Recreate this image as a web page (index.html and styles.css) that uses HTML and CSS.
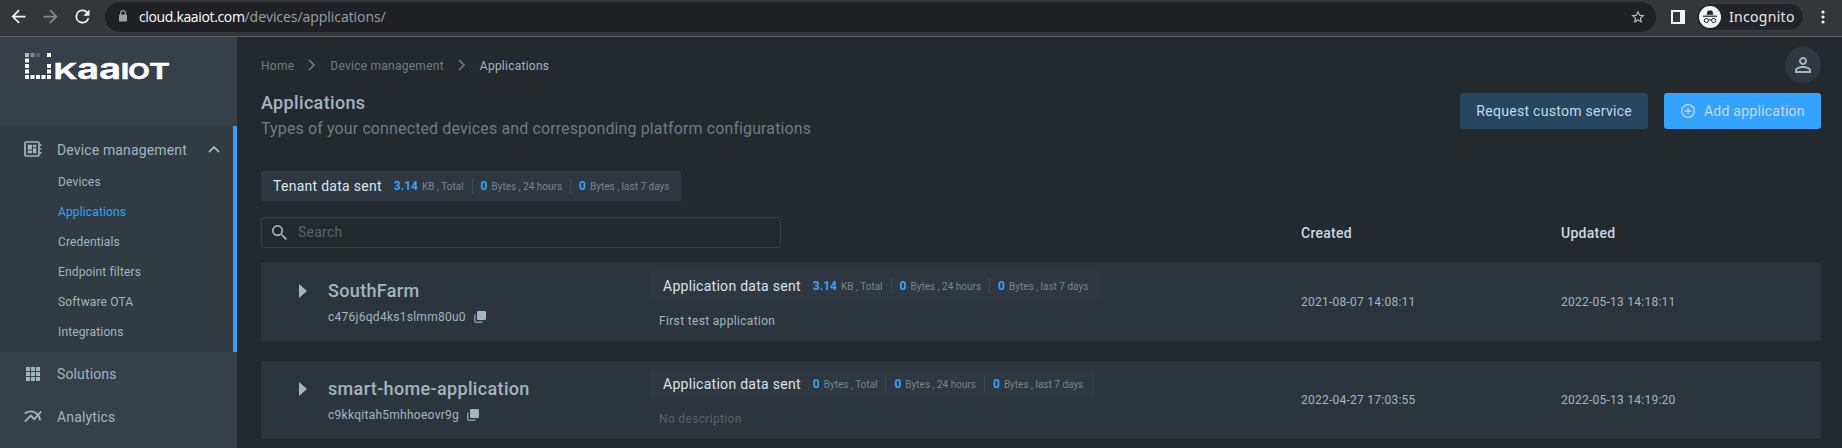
FILE: index.html
```html
<!DOCTYPE html>
<html lang="en">
<head>
<meta charset="utf-8">
<title>Applications</title>
<link rel="stylesheet" href="styles.css">
</head>
<body>
<header class="browser">
  <svg class="nav-icon back" viewBox="0 0 24 24"><path d="M20 11H7.83l5.59-5.59L12 4l-8 8 8 8 1.41-1.41L7.83 13H20v-2z"/></svg>
  <svg class="nav-icon forward" viewBox="0 0 24 24"><path d="M12 4l-1.41 1.41L16.17 11H4v2h12.17l-5.58 5.59L12 20l8-8z"/></svg>
  <svg class="nav-icon reload" viewBox="0 0 24 24"><path d="M17.65 6.35A7.96 7.96 0 0 0 12 4a8 8 0 1 0 7.73 10h-2.08A6 6 0 1 1 12 6c1.66 0 3.14.69 4.22 1.78L13 11h7V4l-2.35 2.35z"/></svg>
  <div class="omnibox">
    <svg class="lock" viewBox="0 0 8 12"><path d="M1.6 5V3a2.4 2.4 0 0 1 4.8 0v2" fill="none" stroke="#9aa0a6" stroke-width="1.2"/><rect y="4.5" width="8" height="7" rx="1" fill="#9aa0a6"/></svg>
    <span class="url"><span class="host">cloud.kaaiot.com</span><span class="path">/devices/applications/</span></span>
    <svg class="star" viewBox="0 0 24 24"><path d="M22 9.24l-7.19-.62L12 2 9.19 8.63 2 9.24l5.46 4.73L5.82 21 12 17.27 18.18 21l-1.63-7.03L22 9.24zM12 15.4l-3.76 2.27 1-4.28-3.32-2.88 4.38-.38L12 6.1l1.71 4.04 4.38.38-3.32 2.88 1 4.28L12 15.4z"/></svg>
  </div>
  <svg class="panel-icon" viewBox="0 0 14 14"><path fill-rule="evenodd" d="M0 0h14v14H0zM2 2v10h7V2z"/></svg>
  <div class="incognito">
    <svg viewBox="0 0 22 22"><circle cx="11" cy="11" r="11" fill="#f1f3f4"/><g fill="#202124"><path d="M7.6 8.8 8.7 4.8q.2-.6.8-.4l1.5.4 1.5-.4q.6-.2.8.4l1.1 4z"/><rect x="4" y="9.6" width="14" height="1.2"/></g><g fill="none" stroke="#202124"><circle cx="7.4" cy="14.5" r="2.1"/><circle cx="14.6" cy="14.5" r="2.1"/><path d="M9.5 14.2q1.5-1 3 0"/></g></svg>
    <span>Incognito</span>
  </div>
  <svg class="menu-icon" viewBox="0 0 4 14"><circle cx="2" cy="2" r="1.6"/><circle cx="2" cy="7" r="1.6"/><circle cx="2" cy="12" r="1.6"/></svg>
</header>

<div class="app">
  <aside class="sidebar">
    <div class="brand">
      <svg class="logo" viewBox="0 0 146 28">
        <g fill="#fff">
          <rect x="0" y="0" width="4" height="4" opacity=".65"/><rect x="5.5" y="0" width="4" height="4" opacity=".4"/><rect x="11" y="0" width="4" height="4" opacity=".2"/>
          <rect x="22" y="0" width="4" height="4"/>
          <rect x="0" y="5.5" width="4" height="4"/><rect x="0" y="11" width="4" height="4"/><rect x="0" y="16.5" width="4" height="4"/>
          <rect x="22" y="11" width="4" height="4"/><rect x="22" y="16.5" width="4" height="4"/>
          <rect x="0" y="22" width="4" height="4"/><rect x="5.5" y="22" width="4" height="4"/><rect x="11" y="22" width="4" height="4"/><rect x="16.5" y="22" width="4" height="4"/><rect x="22" y="22" width="4" height="4"/>
        </g>
        <text class="wordmark" y="26"><tspan x="28.5" textLength="24" lengthAdjust="spacingAndGlyphs">K</tspan><tspan class="tall" x="52" textLength="44" lengthAdjust="spacingAndGlyphs">aa</tspan><tspan x="95.5" textLength="9" lengthAdjust="spacingAndGlyphs">I</tspan><tspan x="103" textLength="22" lengthAdjust="spacingAndGlyphs">O</tspan><tspan x="124" textLength="21" lengthAdjust="spacingAndGlyphs">T</tspan></text>
      </svg>
    </div>
    <nav>
      <section class="group">
        <div class="group-head">
          <svg class="side-icon" viewBox="0 0 18 16"><rect x="1" y="1" width="14" height="14" rx="1.2" fill="none" stroke="#9fb6c3" stroke-width="1.7"/><path d="M3.7 3.8h4.2v4.7H3.7zM3.7 9.5h4.2v2.7H3.7zM8.9 3.8h3.4v2.5H8.9zM8.9 7.3h3.4v4.9H8.9zM15.8 3.3h1.6v1.6h-1.6zM15.8 7.2h1.6v1.6h-1.6zM15.8 11.1h1.6v1.6h-1.6z"/></svg>
          <span>Device management</span>
          <svg class="chevron" viewBox="0 0 12 8"><path d="M1 7l5-5 5 5"/></svg>
        </div>
        <ul class="subnav">
          <li>Devices</li>
          <li class="current">Applications</li>
          <li>Credentials</li>
          <li>Endpoint filters</li>
          <li>Software OTA</li>
          <li>Integrations</li>
        </ul>
      </section>
      <div class="nav-item">
        <svg class="side-icon" viewBox="0 0 18 16"><path d="M2 1h4v4H2zM7 1h4v4H7zM12 1h4v4h-4zM2 6h4v4H2zM7 6h4v4H7zM12 6h4v4h-4zM2 11h4v4H2zM7 11h4v4H7zM12 11h4v4h-4z"/></svg>
        <span>Solutions</span>
      </div>
      <div class="nav-item">
        <svg class="side-icon" viewBox="1.8 3.5 20.4 18"><path d="M22 6.92l-1.41-1.41-2.85 3.21C15.68 6.4 12.83 5 9.61 5 6.72 5 4.07 6.16 2 8l1.42 1.42C5.12 7.93 7.27 7 9.61 7c2.74 0 5.09 1.26 6.77 3.24l-2.88 3.24-4-4L2 16.99l1.5 1.5 6-6.01 4 4 4.05-4.55c.75 1.35 1.25 2.9 1.44 4.55H21c-.22-2.3-.95-4.39-2.04-6.14L22 6.92z"/></svg>
        <span>Analytics</span>
      </div>
    </nav>
  </aside>

  <main class="content">
    <div class="topbar">
      <div class="crumbs">
        <span>Home</span>
        <svg viewBox="0 0 8 12"><path d="M1 1l5 5-5 5"/></svg>
        <span>Device management</span>
        <svg viewBox="0 0 8 12"><path d="M1 1l5 5-5 5"/></svg>
        <span class="here">Applications</span>
      </div>
      <div class="avatar"><svg viewBox="4 4 16 16"><path d="M12 5.9a2.1 2.1 0 1 1 0 4.2 2.1 2.1 0 0 1 0-4.2m0 9c2.97 0 6.1 1.46 6.1 2.1v1.1H5.9V17c0-.64 3.13-2.1 6.1-2.1M12 4C9.79 4 8 5.79 8 8s1.79 4 4 4 4-1.79 4-4-1.79-4-4-4zm0 9c-2.67 0-8 1.34-8 4v3h16v-3c0-2.66-5.33-4-8-4z"/></svg></div>
    </div>

    <div class="heading">
      <div>
        <h1>Applications</h1>
        <p>Types of your connected devices and corresponding platform configurations</p>
      </div>
      <div class="actions">
        <button class="btn">Request custom service</button>
        <button class="btn primary"><svg viewBox="0 0 14 14"><circle cx="7" cy="7" r="6.3"/><path d="M7 3.7v6.6M3.7 7h6.6"/></svg>Add application</button>
      </div>
    </div>

    <div class="stats tenant">
      <span class="label">Tenant data sent</span>
      <span class="stat"><b>3.14</b>KB , Total</span>
      <span class="stat"><b>0</b>Bytes , 24 hours</span>
      <span class="stat"><b>0</b>Bytes , last 7 days</span>
    </div>

    <div class="table-head">
      <div class="search">
        <svg viewBox="3 3 17.5 17.5"><path d="M15.5 14h-.79l-.28-.27A6.47 6.47 0 0 0 16 9.5 6.5 6.5 0 1 0 9.5 16c1.61 0 3.09-.59 4.23-1.57l.27.28v.79l5 4.99L20.49 19l-4.99-5zm-6 0a4.5 4.5 0 1 1 0-9 4.5 4.5 0 0 1 0 9z"/></svg>
        <span>Search</span>
      </div>
      <span class="col created">Created</span>
      <span class="col">Updated</span>
    </div>

    <article class="row">
      <div class="name-cell">
        <svg class="expander" viewBox="0 0 8 14"><path d="M0 0l8 7-8 7z"/></svg>
        <div>
          <h2>SouthFarm</h2>
          <div class="ident">c476j6qd4ks1slmm80u0 <svg viewBox="0 0 12 12"><path d="M1.8 4Q.7 4 .7 5v5.3q0 1 1 1H7q1 0 1-1" fill="none" stroke="#8399a4" stroke-width="1.4"/><rect x="3" width="9" height="9" rx="1.3"/></svg></div>
        </div>
      </div>
      <div class="info">
        <div class="stats">
          <span class="label">Application data sent</span>
          <span class="stat"><b>3.14</b>KB , Total</span>
          <span class="stat"><b>0</b>Bytes , 24 hours</span>
          <span class="stat"><b>0</b>Bytes , last 7 days</span>
        </div>
        <p class="desc">First test application</p>
      </div>
      <time>2021-08-07 14:08:11</time>
      <time>2022-05-13 14:18:11</time>
    </article>

    <article class="row">
      <div class="name-cell">
        <svg class="expander" viewBox="0 0 8 14"><path d="M0 0l8 7-8 7z"/></svg>
        <div>
          <h2>smart-home-application</h2>
          <div class="ident">c9kkqitah5mhhoeovr9g <svg viewBox="0 0 12 12"><path d="M1.8 4Q.7 4 .7 5v5.3q0 1 1 1H7q1 0 1-1" fill="none" stroke="#8399a4" stroke-width="1.4"/><rect x="3" width="9" height="9" rx="1.3"/></svg></div>
        </div>
      </div>
      <div class="info">
        <div class="stats">
          <span class="label">Application data sent</span>
          <span class="stat"><b>0</b>Bytes , Total</span>
          <span class="stat"><b>0</b>Bytes , 24 hours</span>
          <span class="stat"><b>0</b>Bytes , last 7 days</span>
        </div>
        <p class="desc empty">No description</p>
      </div>
      <time>2022-04-27 17:03:55</time>
      <time>2022-05-13 14:19:20</time>
    </article>
  </main>
</div>
</body>
</html>
```

FILE: styles.css
```css
* { box-sizing: border-box; }
body {
  margin: 0;
  height: 448px;
  overflow: hidden;
  background: #24292d;
  color: #9fb6c3;
  font-family: Roboto, "Liberation Sans", sans-serif;
  font-size: 14px;
}
h1, h2, p, ul { margin: 0; padding: 0; }
svg { display: block; flex: none; fill: #9fb6c3; }

/* Browser toolbar */
.browser {
  display: flex;
  align-items: center;
  height: 37px;
  padding: 0 14px 3px 8px;
  background: #35363a;
  border-bottom: 1px solid #5f6063;
}
.nav-icon { width: 21px; height: 21px; margin-right: 11px; fill: #f1f3f4; }
.forward { fill: #85878a; }
.reload { margin-right: 12px; }
.omnibox {
  display: flex;
  align-items: center;
  width: 1551px;
  height: 30px;
  margin-top: 1px;
  padding: 0 10px 0 14px;
  border-radius: 15px;
  background: #202124;
}
.lock { width: 8px; height: 12px; margin-top: -2px; }
.url { flex: 1; margin-left: 12px; font: 14px/20px "Open Sans", sans-serif; white-space: nowrap; }
.host { color: #fff; letter-spacing: -0.35px; }
.path { color: #9aa0a6; letter-spacing: -0.05px; }
.star { width: 16px; height: 16px; fill: #c5c8cc; }
.panel-icon { width: 14px; height: 14px; margin-left: 15px; fill: #f1f3f4; }
.incognito {
  display: flex;
  align-items: center;
  width: 108px;
  height: 28px;
  margin-left: 11px;
  padding-left: 3px;
  border: 1px solid #3b3c40;
  border-radius: 14px;
  background: #232428;
  color: #e8eaed;
  font: 14px/20px "Noto Sans", sans-serif;
  letter-spacing: 0.3px;
}
.incognito svg { width: 22px; height: 22px; margin-right: 8px; margin-left: -1px; }
.menu-icon { width: 4px; height: 14px; margin-left: auto; margin-right: 3px; fill: #f1f3f4; }

/* Sidebar */
.app { display: flex; height: 411px; }
.sidebar { flex: none; width: 237px; background: #364049; letter-spacing: 0.14px; }
.brand { height: 89px; padding: 16px 0 0 25px; }
.logo { width: 146px; height: 28px; overflow: visible; }
.wordmark { fill: #fff; stroke: #fff; stroke-width: 0.3; font: 700 22px Inter, sans-serif; letter-spacing: 0; }
.wordmark .tall { font-size: 28px; }
.group { height: 226px; background: #313b42; border-right: 4px solid #33a3ff; }
.group-head { display: flex; align-items: center; height: 46px; padding: 1px 13px 0 24px; }
.side-icon { width: 18px; height: 16px; margin-right: 15px; }
.group-head .side-icon { margin-top: -1px; }
.chevron { width: 12px; height: 8px; margin-left: auto; margin-top: -2px; }
.chevron path, .crumbs path { fill: none; stroke: #9fb6c3; stroke-width: 1.9; }
.subnav { list-style: none; padding-left: 58px; padding-top: 0; font-size: 12px; line-height: 30px; margin-top: -5px; }
.current { color: #33a3ff; }
.nav-item { display: flex; align-items: center; height: 43px; padding: 1px 0 0 24px; }

/* Content */
.content { flex: 1; padding: 10px 21px 0 24px; letter-spacing: 0.25px; }
.topbar { display: flex; justify-content: space-between; height: 36px; }
.crumbs { display: flex; align-items: center; padding-top: 2px; gap: 14px; font-size: 12px; color: #6c7c85; }
.crumbs svg { width: 8px; height: 12px; margin-top: -2px; }
.crumbs path { stroke: #6c7c85; stroke-width: 1.6; }
.crumbs .here { color: #9fb6c3; }
.avatar { display: grid; place-items: center; width: 36px; height: 36px; border-radius: 50%; background: #2f3741; }
.avatar svg { width: 16px; height: 16px; }
.heading { display: flex; justify-content: space-between; margin-top: 8px; height: 80px; }
h1 { font-size: 18px; font-weight: 500; line-height: 24px; letter-spacing: 0.34px; }
.heading p { font-size: 16px; line-height: 24px; margin-top: 2px; letter-spacing: 0.12px; color: #6c7c85; }
.actions { display: flex; gap: 16px; padding-top: 2px; }
.btn {
  display: flex;
  align-items: center;
  height: 36px;
  padding: 0 16px;
  border: 0;
  border-radius: 3px;
  background: #27465f;
  color: #c9d9e2;
  font: 14px Roboto, sans-serif;
  letter-spacing: 0.29px;
}
.primary { width: 157px; background: #33a3ff; letter-spacing: 0.24px; }
.btn svg { width: 14px; height: 14px; margin: -1px 9px 0 1px; fill: none; stroke: #c9d9e2; stroke-width: 1.3; }

.stats { display: flex; align-items: center; width: max-content; height: 30px; padding: 0 12px; border-radius: 2px; background: #2f3741; }
.label { margin-right: 12px; color: #d9e6ec; letter-spacing: 0.28px; }
.stat { display: flex; align-items: center; height: 16px; color: #74858f; font-size: 10px; letter-spacing: 0; white-space: pre; }
.stat + .stat { margin-left: 8px; padding-left: 8px; border-left: 1px solid #3e4a53; }
.stat b { margin-right: 4px; font-size: 12px; color: #33a3ff; }

.table-head { display: grid; grid-template-columns: 520px 520px 260px 260px; align-items: center; height: 31px; margin: 16px 0 15px; }
.search { display: flex; align-items: center; height: 31px; padding: 0 0 1px 10px; border: 1px solid #3a4145; border-radius: 3px; color: #56636a; }
.search svg { width: 15px; height: 15px; margin: 1px 11px 0 0; }
.col { color: #c9d9e2; font-weight: 500; }
.created { grid-column: 3; }

.row { display: grid; grid-template-columns: 390px 650px 260px 260px; align-items: center; height: 78px; margin-bottom: 20px; background: #2d353c; }
.name-cell { display: flex; padding: 2px 0 0 38px; }
.expander { width: 8px; height: 14px; margin: 7px 21px 0 0; }
h2 { font-size: 18px; font-weight: 500; line-height: 28px; letter-spacing: 0.34px; }
.ident { display: flex; align-items: center; font-size: 12px; line-height: 24px; letter-spacing: 0.27px; }
.ident svg { width: 12px; height: 12px; margin-left: 8px; }
.info { align-self: start; padding-top: 8px; }
.desc { padding: 11px 0 0 8px; font-size: 12px; line-height: 18px; letter-spacing: 0.33px; }
.empty { color: #56636a; }
time { font-size: 12px; }
```
